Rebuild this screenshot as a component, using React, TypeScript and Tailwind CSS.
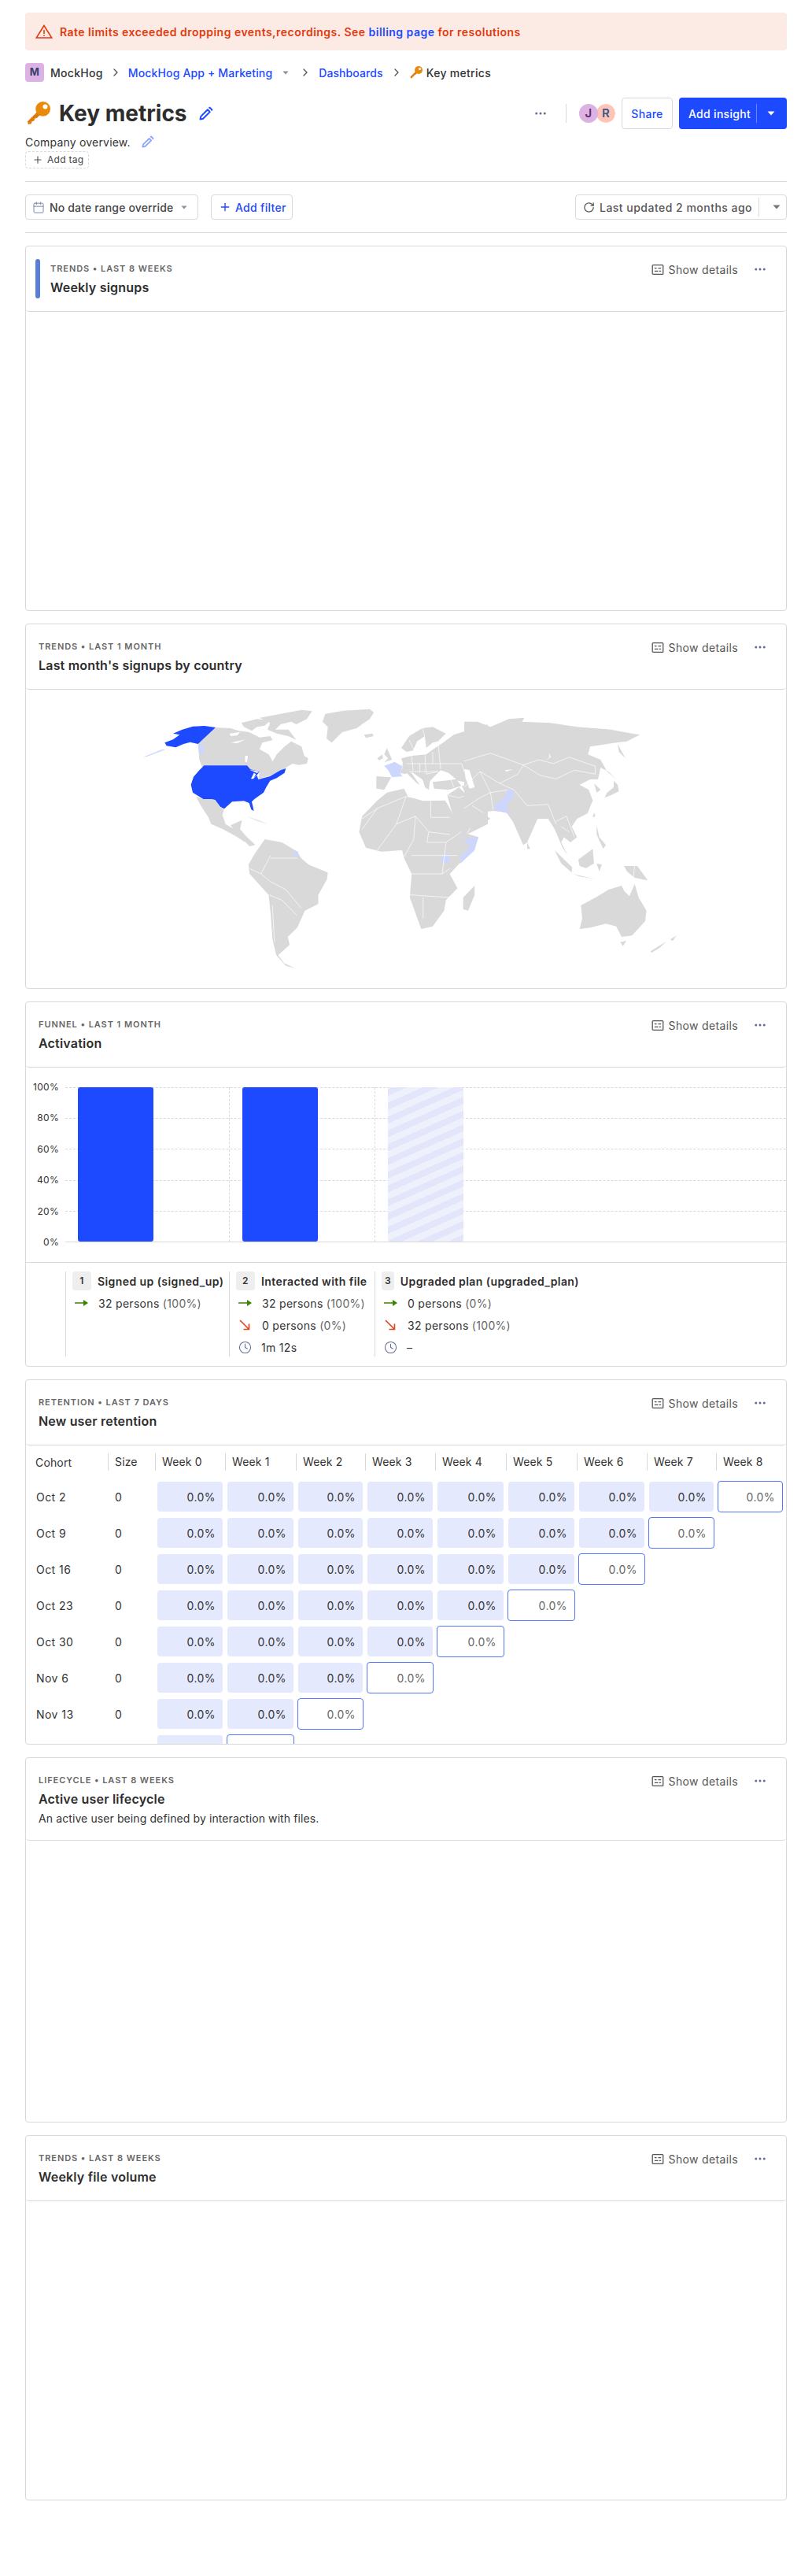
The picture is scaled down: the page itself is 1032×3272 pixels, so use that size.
import { Calendar, ChevronRight, Clock, Ellipsis, Plus, RotateCw } from "lucide-react";
import type { ReactNode } from "react";

const rowGrid = "grid grid-cols-[104px_60px_89px_90px_88px_89px_90px_90px_89px_88px_87px]";
const cohorts = ["Oct 2", "Oct 9", "Oct 16", "Oct 23", "Oct 30", "Nov 6", "Nov 13", "Nov 20"];
const weeks = ["Week 0", "Week 1", "Week 2", "Week 3", "Week 4", "Week 5", "Week 6", "Week 7", "Week 8"];
const ticks = ["100%", "80%", "60%", "40%", "20%", "0%"];

function Caret({ className }: { className: string }) {
  return (
    <svg viewBox="0 0 10 6" className={className} fill="currentColor">
      <path d="M0.5 0.5h9L5 5.5z" />
    </svg>
  );
}

function Key({ className }: { className: string }) {
  return (
    <svg viewBox="0 0 32 32" className={className}>
      <path d="M14 14 1 27l1 4 4-1 1-3 3-1 1-3 3-1 6-6z" fill="#e07b0c" />
      <circle cx="22" cy="10" r="10" fill="#ea8a0b" />
      <circle cx="25" cy="7" r="3.2" fill="#fff" />
    </svg>
  );
}

function Pen({ className }: { className: string }) {
  return (
    <svg viewBox="0 0 18 18" className={className} fill="none" stroke="currentColor" strokeWidth="2">
      <path d="M1.5 16.5l.8-3.6 8.6-8.6 2.8 2.8-8.6 8.6z" strokeLinejoin="round" />
      <path d="M12.6 2.6l1-1 2.8 2.8-1 1" strokeLinejoin="round" />
    </svg>
  );
}

function DetailsIcon() {
  return (
    <svg viewBox="0 0 16 14" className="h-[13px] w-4 text-[#555]" fill="none" stroke="currentColor" strokeWidth="1.4">
      <rect x="0.7" y="0.7" width="14.6" height="12.6" rx="1" />
      <path d="M3.5 5h3M8.5 5h4M3.5 9h5M10 9h2.5" />
    </svg>
  );
}

function WorldMap() {
  const land = "#d9d9d9";
  const pale = "#ccd6ff";
  const blue = "#1d4aff";
  return (
    <svg viewBox="150 880 760 376" className="ml-[117px] mt-[4px] block h-[376px] w-[760px]" preserveAspectRatio="none">
      {/* north america */}
      <g transform="translate(170 890) scale(.3333)">
        <path fill={land} d="M312 102L370 105L400 115L440 120L480 140L520 135L530 150L490 160L480 185L515 205L530 232L545 205L575 175L600 155L640 175L650 210L665 220L660 240L630 245L605 240L570 262L525 285L475 298L480 270L445 262L432 247L268 247L262 255L250 225L245 165Z" />
        <path fill={land} d="M410 85L470 70L520 75L500 95L470 100L450 115L420 100Z" />
        <path fill={land} d="M480 65L560 50L640 35L680 40L660 70L620 90L600 80L560 90L540 110L590 110L620 150L590 135L545 125L510 110L520 85Z" />
        <path fill="#fff" d="M365 125L405 120L395 132L370 135ZM370 160L425 148L395 162ZM425 210L435 210L432 235L424 232Z" />
        <path fill={blue} d="M312 102L245 165L215 158L190 165L160 178L125 172L118 160L150 148L175 130L150 125L185 110L225 98L270 96Z" />
        <path fill={pale} d="M35 215L110 185L120 187L50 213ZM245 168L268 172L268 205L250 200Z" />
        <path fill={blue} d="M268 247L432 247L445 262L480 270L470 283L452 300L470 285L475 300L520 288L560 265L580 258L575 275L545 295L520 305L505 330L495 350L460 375L450 385L458 420L448 415L440 390L420 382L375 385L345 412L330 405L310 378L290 375L265 375L225 350L218 320L228 290L250 265Z" />
        <path fill="#fff" d="M447 298L458 275L466 280L456 298ZM442 263L478 270L470 276Z" />
        <path fill={land} d="M238 365L265 375L290 375L310 378L330 405L345 412L338 435L350 470L375 485L400 470L405 455L385 490L410 510L425 540L395 520L340 490L295 470L285 445L265 415L250 390Z" />
        <path fill="#ececec" d="M430 440L480 455L510 470L470 460Z" />
      </g>
      {/* europe, middle east, atlantic */}
      <g transform="translate(360 900) scale(.3333)">
        <path fill={land} d="M160 20L230 8L330 2L345 15L330 40L300 60L280 75L225 90L185 130L165 115L170 70L150 50Z" />
        <path fill={land} d="M308 100L340 95L345 105L315 112Z" />
        <path fill={land} d="M355 258L412 262L385 310L355 305Z" />
        <path fill={land} d="M385 175L395 150L415 195L385 205L400 190ZM358 190L378 175L380 190L365 197Z" />
        <path fill={land} d="M455 205L450 190L490 180L545 175L565 160L610 130L650 100L780 60L780 330L720 290L700 270L690 280L640 270L660 270L630 245L600 235L580 255L545 290L530 270L495 245L480 240L465 250L445 245L455 225Z" />
        <path fill={land} d="M465 240L485 240L520 290L510 285ZM530 265L560 270L555 310L540 300Z" />
        <path fill={land} d="M570 280L660 270L680 295L630 310L575 305Z" />
        <path fill={land} d="M625 330L670 300L700 330L720 370L745 395L780 400L780 440L700 480L680 490L650 420Z" />
        <path fill={land} d="M680 295L780 280L780 400L745 395L710 355Z" />
        <path fill={land} d="M450 150L480 105L530 75L570 70L620 95L590 125L570 130L545 150L540 105L510 125L495 160L470 165Z" />
        <path fill="#fff" d="M700 235L720 235L740 300L720 305L705 265Z" />
        <path fill={pale} d="M385 218L425 203L455 220L445 245L455 258L415 262L400 235Z" />
        <path fill="none" stroke="#fff" strokeWidth="0.7" vectorEffect="non-scaling-stroke" d="M490 180L495 240M540 178L545 250L590 240M470 210L640 210M590 130L600 230M480 240L590 240M640 210L680 210L700 270M500 160L480 120M530 75L540 105M520 210L520 245M570 165L570 210M680 295L700 340M625 330L670 340L700 330M640 270L650 300M700 480L720 440L780 425" />
      </g>
      {/* asia, oceania */}
      <g transform="translate(590 900) scale(.3333)">
        <path fill={land} d="M0 50L50 50L100 70L170 40L230 35L220 50L330 55L430 70L560 80L640 95L670 100L620 125L580 130L480 145L472 175L520 195L545 240L580 270L550 240L520 225L510 270L480 270L440 290L475 310L490 350L470 400L430 420L410 450L430 490L405 510L380 490L370 510L395 560L375 530L345 460L320 420L280 420L240 510L225 520L185 430L160 395L110 390L70 395L100 420L50 450L0 460Z" />
        <path fill={land} d="M495 285L520 310L505 320ZM590 315L560 330L535 340L545 320L570 300L570 275L585 290ZM585 135L615 190L590 165ZM240 510L252 535L240 535ZM345 540L412 605L410 625L370 590ZM435 575L490 535L495 590L465 608L440 600ZM415 630L500 650L440 640ZM505 590L525 595L515 620ZM505 445L515 490L540 520L530 535L505 480ZM495 395L500 410L490 415Z" />
        <path fill={land} d="M610 600L660 600L700 655L650 645L620 620Z" />
        <path fill={land} d="M445 750L510 715L550 690L600 675L610 695L630 715L650 668L665 720L695 770L690 810L640 865L600 870L580 830L540 820L480 835L440 840L450 800Z" />
        <path fill={land} d="M595 890L618 885L605 905ZM710 925L770 888L745 912L715 930ZM785 880L810 865L795 885Z" />
        <path fill="#fff" d="M325 168L330 185L310 198L325 185ZM0 230L20 235L40 300L20 305L5 265ZM155 235L185 232L160 240Z" />
        <path fill={pale} d="M165 310L190 310L185 340L160 370L170 400L150 395L110 385L125 360L150 345Z" />
        <path fill="none" stroke="#fff" strokeWidth="0.7" vectorEffect="non-scaling-stroke" d="M0 200L100 170L225 215L205 250L135 285L60 240L0 300M225 215L285 195L340 210L400 185L500 220L500 250L420 235L350 268L290 255L225 215M190 310L240 370L320 365L350 440M100 320L110 385M350 430L390 410L420 490M60 240L100 320L165 310M135 285L190 310M650 600L645 645M370 450L400 470M0 380L60 340L100 320M30 370L70 395" />
      </g>
      {/* south america, africa */}
      <g transform="translate(150 880) scale(.4847 .3333)">
        <path fill={land} d="M295 505L325 485L320 520L335 545L360 580L345 585L315 540Z" />
        <path fill={land} d="M385 558L430 570L470 605L480 630L500 655L550 685L548 710L525 770L525 805L490 830L470 895L445 930L450 960L420 1000L435 1030L465 1050L440 1040L415 1000L405 940L400 840L395 770L345 690L342 655L360 610Z" />
        <path fill={land} d="M640 470L680 410L705 380L750 365L760 395L800 412L858 410L870 440L900 530L945 550L935 590L895 650L870 690L890 745L860 790L855 830L825 890L795 900L765 780L770 690L750 630L745 600L690 605L650 590L632 530Z" />
        <path fill={land} d="M935 735L935 770L918 830L905 825L905 780Z" />
        <path fill={pale} d="M905 560L945 550L935 600L897 652L900 620L925 585ZM850 620L870 615L865 650L848 648ZM462 600L472 605L472 625L462 625Z" />
        <path fill="none" stroke="#fff" strokeWidth="0.7" vectorEffect="non-scaling-stroke" d="M640 480L680 440L755 395L820 410L820 475L870 475M755 395L730 500L780 470L815 530L870 540M680 440L640 520M730 500L680 600M780 470L775 560L750 625M815 530L810 570L860 570L900 530M770 620L890 620M770 690L850 690L870 670M765 770L870 780M800 780L800 860M860 570L850 690M400 630L470 630M375 690L400 720L440 750L480 820M395 770L430 790L470 850M345 670L375 690L400 620M405 810L410 950" />
      </g>
    </svg>
  );
}

function FunnelStep({ n, title, width, rows }: { n: number; title: string; width: string; rows: ReactNode[] }) {
  return (
    <div className={`${width} border-l border-[#d9d9d9] pl-2`}>
      <div className="flex h-6 items-center">
        <span className="flex h-6 w-6 items-center justify-center rounded bg-[#eeeeee] text-[12px] font-semibold text-[#333]">{n}</span>
        <span className="ml-2 whitespace-nowrap text-[14px] font-semibold tracking-[0.42px] text-[#2d2d2d]">{title}</span>
      </div>
      {rows.map((row, i) => (
        <div key={i} className="flex h-7 items-center whitespace-nowrap pt-1 text-[14px] text-[#333]">
          {row}
        </div>
      ))}
    </div>
  );
}

function Persons({ kind, count, pct }: { kind: "in" | "out"; count: string; pct: string }) {
  return (
    <>
      <span className="ml-[3px] flex w-[21px] shrink-0 justify-start">
        {kind === "in" ? (
          <svg viewBox="0 0 17 8" className="h-2 w-[17px]" fill="#388600">
            <path d="M0 3.2h11V0l6 4-6 4V4.8H0z" />
          </svg>
        ) : (
          <svg viewBox="0 0 14 14" className="ml-px h-[14px] w-[14px]" fill="none" stroke="#e0441c" strokeWidth="1.6">
            <path d="M1 1l11 11M12.5 5.5v7h-7" />
          </svg>
        )}
      </span>
      <span className="ml-[9px]">
        {count} <span className="text-[#666]">({pct})</span>
      </span>
    </>
  );
}

function Duration({ value }: { value: string }) {
  return (
    <>
      <Clock className="ml-[3px] h-[17px] w-[17px] text-[#5f6c96]" strokeWidth={1.5} />
      <span className="ml-3">{value}</span>
    </>
  );
}

function FunnelChart() {
  return (
    <>
      <div className="relative mt-[25px] flex h-[197px]">
        <div className="relative w-[50px]">
          {ticks.map((t, i) => (
            <span
              key={t}
              className="absolute right-[8px] -translate-y-1/2 text-[12px] leading-none text-[#333]"
              style={{ top: `${(i / 5) * 100}%` }}
            >
              {t}
            </span>
          ))}
        </div>
        <div className="relative flex flex-1 border-b border-[#d9d9d9]">
          <div className="absolute inset-0 flex flex-col justify-between">
            {ticks.slice(0, 5).map((t) => (
              <div key={t} className="h-0 border-t border-dashed border-[#d9d9d9]" />
            ))}
            <div />
          </div>
          <div className="relative w-[208px] pl-4">
            <div className="h-full w-[96px] rounded-[3px] bg-[#1d4aff]" />
          </div>
          <div className="relative w-[185px] border-l border-dashed border-[#d9d9d9] pl-4">
            <div className="h-full w-[96px] rounded-[3px] bg-[#1d4aff]" />
          </div>
          <div className="relative border-l border-dashed border-[#d9d9d9] pl-4">
            <div className="h-full w-[96px] rounded-[3px] bg-[repeating-linear-gradient(-24deg,#e3e6fb_0px,#e3e6fb_8px,#eef0fc_8px,#eef0fc_16px)]" />
          </div>
        </div>
      </div>
      <div className="mt-[25px] flex border-t border-[#d9d9d9] pl-[50px] pt-[11px]">
        <FunnelStep
          n={1}
          title="Signed up (signed_up)"
          width="w-[208px]"
          rows={[<Persons kind="in" count="32 persons" pct="100%" />]}
        />
        <FunnelStep
          n={2}
          title="Interacted with file"
          width="w-[185px]"
          rows={[
            <Persons kind="in" count="32 persons" pct="100%" />,
            <Persons kind="out" count="0 persons" pct="0%" />,
            <Duration value="1m 12s" />,
          ]}
        />
        <FunnelStep
          n={3}
          title="Upgraded plan (upgraded_plan)"
          width="w-[260px]"
          rows={[
            <Persons kind="in" count="0 persons" pct="0%" />,
            <Persons kind="out" count="32 persons" pct="100%" />,
            <Duration value="–" />,
          ]}
        />
      </div>
    </>
  );
}

function RetentionTable() {
  return (
    <div className="pt-[10px]">
      <div className={`${rowGrid} mb-[10px] h-[22px] items-center text-[14px] tracking-[0.15px] text-[#333]`}>
        <div className="pl-3">Cohort</div>
        <div className="h-full border-l border-[#d9d9d9] pl-2 leading-[22px]">Size</div>
        {weeks.map((w) => (
          <div key={w} className="h-full border-l border-[#d9d9d9] pl-2 leading-[22px]">
            {w}
          </div>
        ))}
      </div>
      {cohorts.map((c, i) => {
        // the last row sits under the card's edge, only the top of its cells shows
        const clipped = i === cohorts.length - 1;
        return (
          <div key={c} className={`${rowGrid} h-[46px] items-center text-[14px] tracking-[0.45px] text-[#333]`}>
            <div className="pl-[13px]">{!clipped && c}</div>
            <div className="pl-[9px]">{!clipped && "0"}</div>
            {weeks.slice(0, 9 - i).map((w, j) =>
              j === 8 - i ? (
                <div key={w} className="mx-[2px] flex h-10 items-center justify-end rounded border border-[#5375ff] pr-[9px] text-[#666]">
                  {!clipped && "0.0%"}
                </div>
              ) : (
                <div key={w} className="mx-[3px] flex h-[38px] items-center justify-end rounded bg-[#e5e9fd] pr-[9px]">
                  {!clipped && "0.0%"}
                </div>
              ),
            )}
          </div>
        );
      })}
    </div>
  );
}

function Card({
  kicker,
  title,
  description,
  accent,
  children,
}: {
  kicker: string;
  title: string;
  description?: string;
  accent?: boolean;
  children?: ReactNode;
}) {
  return (
    <section className="h-[464px] overflow-hidden rounded border border-[#d9d9d9] bg-white">
      <header className={`flex rounded border-b border-[#d9d9d9] pl-4 pr-[24px] pt-[16px] ${description ? "h-[105px]" : "h-[83px]"}`}>
        {accent && <div className="-ml-1 mr-[13px] h-[50px] w-[6px] rounded-full bg-[#587ed6]" />}
        <div className="flex-1">
          <div className="mt-[6px] text-[11px] font-semibold uppercase leading-[13px] tracking-[0.085em] text-[#666]">{kicker}</div>
          <div className="mt-[6px] text-[16px] font-semibold leading-[22px] tracking-[0.2px] text-[#2d2d2d]">{title}</div>
          {description && <div className="mt-[4px] text-[14px] leading-[20px] tracking-[0.1px] text-[#333]">{description}</div>}
        </div>
        <div className="flex h-[26px] items-center">
          <DetailsIcon />
          <span className="ml-[6px] text-[14px] tracking-[0.35px] text-[#555]">Show details</span>
          <Ellipsis className="ml-[19px] h-[18px] w-[18px] text-[#5f6c96]" />
        </div>
      </header>
      {children}
    </section>
  );
}

export default function App() {
  return (
    <div className="min-h-[3272px] bg-white px-8 pt-4 font-['Inter',sans-serif] text-[14px] tracking-[0.3px] text-[#2d2d2d]">
      <div className="flex h-12 items-center rounded bg-[#fcebe4] pl-[13px] font-semibold tracking-[0.48px] text-[#e03a0f]">
        <svg viewBox="0 0 22 18" className="h-[18px] w-[22px]" fill="none" stroke="#e03a0f" strokeWidth="1.6">
          <path d="M11 1.5 1.2 17h19.6z" strokeLinejoin="miter" />
          <path d="M11 7v5M11 13.4v1.6" />
        </svg>
        <span className="ml-[9px]">
          Rate limits exceeded dropping events,recordings. See <span className="text-[#1d4aff]">billing page</span> for resolutions
        </span>
      </div>

      <nav className="mt-4 flex h-6 items-center">
        <span className="flex h-6 w-6 items-center justify-center rounded bg-[#dcb1e3] text-[13px] font-bold text-[#35416b]">M</span>
        <span className="ml-2 font-medium text-[#333]">MockHog</span>
        <ChevronRight className="ml-2 h-4 w-4 text-[#555]" />
        <span className="ml-2 font-medium tracking-[0.15px] text-[#1d4aff]">MockHog App + Marketing</span>
        <Caret className="ml-[13px] h-[5px] w-2 text-[#8a8f9f]" />
        <ChevronRight className="ml-[13px] h-4 w-4 text-[#555]" />
        <span className="ml-[9px] font-medium tracking-[0.1px] text-[#1d4aff]">Dashboards</span>
        <ChevronRight className="ml-[9px] h-4 w-4 text-[#555]" />
        <Key className="ml-[9px] h-4 w-4" />
        <span className="ml-[5px] font-medium text-[#333]">Key metrics</span>
      </nav>

      <div className="mt-5 flex items-start justify-between">
        <div>
          <div className="flex h-10 items-center">
            <Key className="ml-px h-[30px] w-8" />
            <h1 className="ml-[10px] text-[28px] font-bold leading-none tracking-normal text-[#2d2d2d]">Key metrics</h1>
            <Pen className="ml-[15px] h-[18px] w-[18px] text-[#1d4aff]" />
          </div>
          <div className="mt-[6px] flex h-5 items-center tracking-[0.2px] text-[#333]">
            Company overview.
            <Pen className="ml-[14px] h-4 w-4 text-[#8da2ff]" />
          </div>
          <div className="mt-[2px] flex h-[22px] w-[81px] items-center rounded border border-dashed border-[#d9d9d9] pl-2 text-[12px] text-[#444]">
            <Plus className="h-[14px] w-[14px] text-[#555]" />
            <span className="ml-[5px]">Add tag</span>
          </div>
        </div>
        <div className="flex h-10 items-center">
          <Ellipsis className="h-[18px] w-[18px] text-[#5f6c96]" />
          <div className="ml-[23px] h-6 w-px bg-[#d9d9d9]" />
          <div className="relative ml-4 flex h-6 w-6 items-center justify-center rounded-full bg-[#dcb1e3] text-[15px] font-semibold text-[#5a2c66]">J</div>
          <div className="-ml-[2px] flex h-6 w-6 items-center justify-center rounded-full bg-[#ffc4b5] text-[15px] font-semibold text-[#35588e] outline outline-1 outline-white">R</div>
          <div className="ml-2 flex h-10 w-[65px] items-center justify-center rounded border border-[#d9d9d9] font-medium text-[#1d4aff]">Share</div>
          <div className="ml-2 flex h-10 w-[137px] items-center rounded bg-[#1d4aff] pl-3 font-medium text-white">
            <span className="w-[77px] whitespace-nowrap">Add insight</span>
            <div className="ml-[9px] h-6 w-px bg-[#6d87ff]" />
            <Caret className="ml-[13px] h-[6px] w-[10px] text-white" />
          </div>
        </div>
      </div>

      <div className="mt-4 flex items-center justify-between border-y border-[#d9d9d9] py-4">
        <div className="flex items-center">
          <div className="flex h-8 w-[220px] items-center rounded border border-[#d9d9d9] pl-2 text-[#444]">
            <Calendar className="h-[17px] w-4 text-[#7c86ab]" strokeWidth={1.5} />
            <span className="ml-[6px] whitespace-nowrap font-medium tracking-[0.15px]">No date range override</span>
            <Caret className="ml-[10px] h-[5px] w-2 text-[#8a8f9f]" />
          </div>
          <div className="ml-4 flex h-8 w-[104px] items-center rounded border border-[#d9d9d9] pl-[9px] font-medium text-[#1d4aff]">
            <Plus className="h-4 w-4" strokeWidth={2} />
            <span className="ml-[5px]">Add filter</span>
          </div>
        </div>
        <div className="flex h-8 w-[269px] items-center rounded border border-[#d9d9d9] pl-[9px] text-[#555]">
          <RotateCw className="h-[15px] w-[15px]" strokeWidth={2} />
          <span className="ml-[6px] whitespace-nowrap font-medium tracking-[0.48px]">Last updated 2 months ago</span>
          <div className="ml-2 h-6 w-px bg-[#d9d9d9]" />
          <Caret className="ml-[17px] h-[6px] w-[10px] text-[#777]" />
        </div>
      </div>

      <div className="mt-4 flex flex-col gap-4">
        <Card kicker="Trends • Last 8 weeks" title="Weekly signups" accent />
        <Card kicker="Trends • Last 1 month" title="Last month's signups by country">
          <WorldMap />
        </Card>
        <Card kicker="Funnel • Last 1 month" title="Activation">
          <FunnelChart />
        </Card>
        <Card kicker="Retention • Last 7 days" title="New user retention">
          <RetentionTable />
        </Card>
        <Card
          kicker="Lifecycle • Last 8 weeks"
          title="Active user lifecycle"
          description="An active user being defined by interaction with files."
        />
        <Card kicker="Trends • Last 8 weeks" title="Weekly file volume" />
      </div>
    </div>
  );
}
